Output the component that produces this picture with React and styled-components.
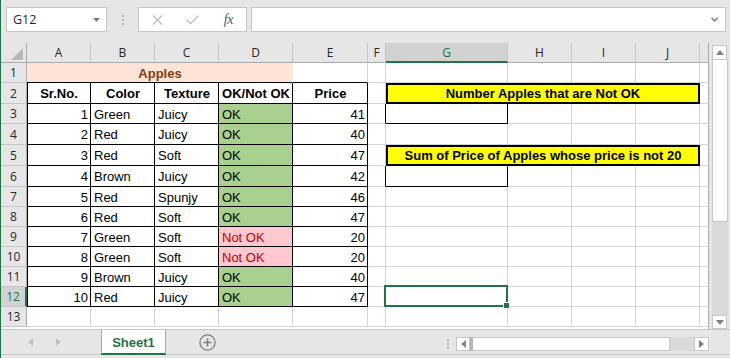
import React from "react";
import styled, { createGlobalStyle } from "styled-components";

const GlobalStyle = createGlobalStyle`
  html, body {
    margin: 0;
    padding: 0;
    background: #e6e6e6;
  }
`;

const GREEN = "#217346";
const GRIDLINE = "#d4d4d4";
const LINE = "#000";
const CHROME = "#e6e6e6";

const Window = styled.div`
  width: 730px;
  height: 358px;
  box-sizing: border-box;
  border-left: 1px solid ${GREEN};
  background: ${CHROME};
  display: flex;
  flex-direction: column;
  overflow: hidden;
  font-family: "Open Sans", "Liberation Sans", sans-serif;
`;

const FormulaBar = styled.div`
  height: 43px;
  flex: none;
  display: flex;
  align-items: flex-start;
  padding: 7px 4px 0 5px;
  box-sizing: border-box;
`;

const InputBox = styled.div`
  height: 25px;
  box-sizing: border-box;
  background: #fff;
  border: 1px solid #c6c6c6;
  display: flex;
  align-items: center;
`;

const NameBox = styled(InputBox)`
  width: 101px;
  padding: 0 6px;
  justify-content: space-between;
  font-size: 12.5px;
  color: #262626;
`;

const Grip = styled.div`
  width: 31px;
  height: 25px;
  display: flex;
  flex-direction: column;
  align-items: center;
  justify-content: center;
  gap: 2px;
  & span {
    width: 2px;
    height: 2px;
    background: ${(p) => p.$color || "#b4b4b4"};
  }
`;

const FxBox = styled(InputBox)`
  width: 109px;
  padding-left: 1px;
`;

const FxSlot = styled.div`
  width: 36px;
  display: flex;
  justify-content: center;
  align-items: center;
  color: ${(p) => p.$color || "#bdbdbd"};
`;

const FxText = styled.span`
  font-family: "Liberation Serif", serif;
  font-style: italic;
  font-size: 14px;
  color: #595959;
  letter-spacing: -0.5px;
`;

const FormulaInput = styled(InputBox)`
  flex: 1;
  margin-left: 4px;
  justify-content: flex-end;
  padding-right: 7px;
`;

const SheetArea = styled.div`
  height: 286px;
  flex: none;
  display: flex;
`;

const Grid = styled.div`
  width: 708px;
  box-sizing: border-box;
  background: #fff;
  border-right: 1px solid #ababab;
  display: grid;
  grid-template-columns: 26px 64px 64px 64px 74px 75px 18px 122px 64px 64px 64px 1fr;
  grid-template-rows: 20px ${(p) => p.$rows.map((h) => h + "px").join(" ")} 1fr;
  font-family: "Liberation Sans", Arial, sans-serif;
  font-size: 13px;
`;

const Corner = styled.div`
  background: ${CHROME};
  border-right: 1px solid #ababab;
  border-bottom: 1px solid #ababab;
  box-sizing: border-box;
  display: flex;
  align-items: flex-end;
  justify-content: flex-end;
  padding: 0 3px 2px 0;
`;

const ColHead = styled.div`
  box-sizing: border-box;
  background: ${(p) => (p.$active ? "#d2d2d2" : CHROME)};
  color: ${(p) => (p.$active ? GREEN : "#262626")};
  border-right: 1px solid ${(p) => (p.$last ? CHROME : "#c6c6c6")};
  border-bottom: ${(p) => (p.$active ? `2px solid ${GREEN}` : "1px solid #ababab")};
  display: flex;
  align-items: center;
  justify-content: center;
  font-family: "Open Sans", sans-serif;
  font-size: 12px;
  padding-top: ${(p) => (p.$active ? "1px" : "0")};
`;

const RowHead = styled.div`
  box-sizing: border-box;
  background: ${(p) => (p.$active ? "#d2d2d2" : CHROME)};
  color: ${(p) => (p.$active ? GREEN : "#262626")};
  border-right: ${(p) => (p.$active ? `2px solid ${GREEN}` : "1px solid #ababab")};
  border-bottom: 1px solid #c6c6c6;
  display: flex;
  align-items: center;
  justify-content: center;
  font-family: "Open Sans", sans-serif;
  font-size: 12px;
`;

const Cell = styled.div`
  box-sizing: border-box;
  grid-column: span ${(p) => p.$span || 1};
  min-width: 0;
  display: flex;
  align-items: center;
  justify-content: ${(p) => p.$align || "flex-start"};
  padding: 1px 2px 0 3px;
  background: ${(p) => p.$bg || "#fff"};
  color: ${(p) => p.$color || "#000"};
  font-weight: ${(p) => (p.$bold ? 700 : 400)};
  border-right: 1px solid ${(p) => p.$r || GRIDLINE};
  border-bottom: 1px solid ${(p) => p.$b || GRIDLINE};
  box-shadow: ${(p) => (p.$left ? "inset 1px 0 0 #000" : "none")};
  white-space: nowrap;
  overflow: hidden;
`;

const NoteCell = styled(Cell)`
  border: 2px solid ${LINE};
  background: #ffff00;
  justify-content: center;
  font-weight: 700;
  padding: 0;
`;

const SelectedCell = styled(Cell)`
  position: relative;
  overflow: visible;
  z-index: 2;
  &::before {
    content: "";
    position: absolute;
    left: -2px;
    top: -2px;
    right: -1px;
    bottom: -1px;
    border: 2px solid ${GREEN};
  }
  &::after {
    content: "";
    position: absolute;
    right: -3px;
    bottom: -3px;
    width: 5px;
    height: 5px;
    background: ${GREEN};
    border: 1px solid #fff;
  }
`;

const VScroll = styled.div`
  width: 21px;
  flex: none;
  box-sizing: border-box;
  padding: 2px 2px 0 3px;
  display: flex;
  flex-direction: column;
`;

const ScrollButton = styled.div`
  box-sizing: border-box;
  flex: none;
  width: ${(p) => p.$w || "15px"};
  height: ${(p) => p.$h || "15px"};
  background: #fff;
  border: 1px solid #c6c6c6;
  display: flex;
  align-items: center;
  justify-content: center;
`;

const VThumb = styled.div`
  height: 162px;
  flex: none;
  box-sizing: border-box;
  background: #fff;
  border: 1px solid #c6c6c6;
  border-top: none;
`;

const Track = styled.div`
  flex: 1;
  background: #dadada;
`;

const TabBar = styled.div`
  height: 26px;
  flex: none;
  box-sizing: border-box;
  border-top: 1px solid #c6c6c6;
  border-bottom: 1px solid #c6c6c6;
  display: flex;
  align-items: stretch;
`;

const TabNav = styled.div`
  width: 100px;
  display: flex;
  align-items: center;
  padding-left: 27px;
  gap: 23px;
  box-sizing: border-box;
`;

const Tab = styled.div`
  width: 65px;
  box-sizing: border-box;
  background: #fff;
  border-left: 1px solid #ababab;
  border-right: 1px solid #ababab;
  border-bottom: 2px solid ${GREEN};
  margin-bottom: -1px;
  display: flex;
  align-items: center;
  justify-content: center;
  color: ${GREEN};
  font-family: "Liberation Sans", Arial, sans-serif;
  font-weight: 700;
  font-size: 13px;
  padding-top: 1px;
`;

const AddSheet = styled.div`
  margin-left: 33px;
  display: flex;
  align-items: center;
`;

const HScroll = styled.div`
  margin-left: auto;
  margin-right: 21px;
  display: flex;
  align-items: flex-start;
  padding-top: 7px;
`;

const HThumb = styled.div`
  width: 200px;
  height: 14px;
  box-sizing: border-box;
  background: #fff;
  border: 1px solid #c6c6c6;
  border-left: 3px solid #b4b4b4;
`;

const HTrack = styled.div`
  width: 24px;
  height: 14px;
  background: #dadada;
`;

const apples = [
  [1, "Green", "Juicy", "OK", 41],
  [2, "Red", "Juicy", "OK", 40],
  [3, "Red", "Soft", "OK", 47],
  [4, "Brown", "Juicy", "OK", 42],
  [5, "Red", "Spunjy", "OK", 46],
  [6, "Red", "Soft", "OK", 47],
  [7, "Green", "Soft", "Not OK", 20],
  [8, "Green", "Soft", "Not OK", 20],
  [9, "Brown", "Juicy", "OK", 40],
  [10, "Red", "Juicy", "OK", 47],
];

const notes = {
  2: "Number Apples that are Not OK",
  5: "Sum of Price of Apples whose price is not 20",
};

const columns = ["A", "B", "C", "D", "E", "F", "G", "H", "I", "J", ""];
const rowHeights = [20, 21, 20, 21, 21, 21, 20, 20, 20, 20, 20, 20, 20];
const selectedRow = 12;

const Triangle = ({ dir, color = "#c0c0c0" }) => (
  <svg width="5" height="8" viewBox="0 0 5 8">
    <polygon points={dir === "left" ? "5,0 5,8 0,4" : "0,0 0,8 5,4"} fill={color} />
  </svg>
);

function rowCells(n) {
  const out = [];
  if (n === 1) {
    out.push(
      <Cell key="A" $span={4} $bg="#fce4d6" $r="#fce4d6" $b={LINE} $align="center" $bold $color="#843c0c">
        Apples
      </Cell>
    );
    out.push(<Cell key="E" $b={LINE} />);
  } else if (n === 2) {
    ["Sr.No.", "Color", "Texture", "OK/Not OK", "Price"].forEach((t, i) =>
      out.push(
        <Cell key={i} $left={i === 0} $r={LINE} $b={LINE} $align="center" $bold>
          {t}
        </Cell>
      )
    );
  } else if (n <= 12) {
    const [no, color, texture, status, price] = apples[n - 3];
    const bad = status !== "OK";
    out.push(<Cell key="A" $left $r={LINE} $b={LINE} $align="flex-end">{no}</Cell>);
    out.push(<Cell key="B" $r={LINE} $b={LINE}>{color}</Cell>);
    out.push(<Cell key="C" $r={LINE} $b={LINE}>{texture}</Cell>);
    out.push(
      <Cell key="D" $r={LINE} $b={LINE} $bg={bad ? "#ffc7ce" : "#a9d08e"} $color={bad ? "#c00000" : "#000"}>
        {status}
      </Cell>
    );
    out.push(<Cell key="E" $r={LINE} $b={LINE} $align="flex-end">{price}</Cell>);
  } else {
    ["A", "B", "C", "D", "E"].forEach((c) => out.push(<Cell key={c} />));
  }

  if (notes[n]) {
    out.push(<Cell key="F" />);
    out.push(<NoteCell key="G" $span={4}>{notes[n]}</NoteCell>);
  } else if (n === 3 || n === 6) {
    out.push(<Cell key="F" $r={LINE} />);
    out.push(<Cell key="G" $r={LINE} $b={LINE} />);
    ["H", "I", "J"].forEach((c) => out.push(<Cell key={c} />));
  } else {
    out.push(<Cell key="F" />);
    out.push(n === selectedRow ? <SelectedCell key="G" /> : <Cell key="G" />);
    ["H", "I", "J"].forEach((c) => out.push(<Cell key={c} />));
  }
  out.push(<Cell key="K" $r="#fff" />);
  return out;
}

export default function App() {
  return (
    <>
      <GlobalStyle />
      <Window>
        <FormulaBar>
          <NameBox>
            <span>G12</span>
            <svg width="7" height="4" viewBox="0 0 7 4">
              <polygon points="0,0 7,0 3.5,4" fill="#7a7a7a" />
            </svg>
          </NameBox>
          <Grip>
            <span />
            <span />
            <span />
          </Grip>
          <FxBox>
            <FxSlot>
              <svg width="11" height="10" viewBox="0 0 11 10">
                <path d="M1 0.5 L10 9.5 M10 0.5 L1 9.5" stroke="currentColor" strokeWidth="1.3" fill="none" />
              </svg>
            </FxSlot>
            <FxSlot>
              <svg width="13" height="10" viewBox="0 0 13 10">
                <path d="M0.8 5 L4.5 8.8 L12.3 0.8" stroke="currentColor" strokeWidth="1.4" fill="none" />
              </svg>
            </FxSlot>
            <FxSlot>
              <FxText>fx</FxText>
            </FxSlot>
          </FxBox>
          <FormulaInput>
            <svg width="7" height="5" viewBox="0 0 7 5">
              <path d="M0.5 0.8 L3.5 4 L6.5 0.8" stroke="#7a7a7a" strokeWidth="1.5" fill="none" />
            </svg>
          </FormulaInput>
        </FormulaBar>

        <SheetArea>
          <Grid $rows={rowHeights}>
            <Corner>
              <svg width="12" height="12" viewBox="0 0 12 12">
                <polygon points="12,0 12,12 0,12" fill="#b8b8b8" />
              </svg>
            </Corner>
            {columns.map((c, i) => (
              <ColHead key={i} $active={c === "G"} $last={i === columns.length - 1}>
                {c}
              </ColHead>
            ))}
            {rowHeights.map((_, i) => (
              <React.Fragment key={i}>
                <RowHead $active={i + 1 === selectedRow}>{i + 1}</RowHead>
                {rowCells(i + 1)}
              </React.Fragment>
            ))}
          </Grid>
          <VScroll>
            <ScrollButton>
              <svg width="8" height="5" viewBox="0 0 8 5">
                <polygon points="0,5 8,5 4,0" fill="#808080" />
              </svg>
            </ScrollButton>
            <VThumb />
            <Track />
            <ScrollButton $h="14px">
              <svg width="8" height="5" viewBox="0 0 8 5">
                <polygon points="0,0 8,0 4,5" fill="#808080" />
              </svg>
            </ScrollButton>
          </VScroll>
        </SheetArea>

        <TabBar>
          <TabNav>
            <Triangle dir="left" />
            <Triangle dir="right" />
          </TabNav>
          <Tab>Sheet1</Tab>
          <AddSheet>
            <svg width="17" height="17" viewBox="0 0 17 17">
              <circle cx="8.5" cy="8.5" r="7.6" stroke="#7f7f7f" strokeWidth="1.3" fill="none" />
              <path d="M8.5 4.5 V12.5 M4.5 8.5 H12.5" stroke="#7f7f7f" strokeWidth="1.6" />
            </svg>
          </AddSheet>
          <HScroll>
            <Grip $color="#b4b4b4" style={{ height: 14, width: 17 }}>
              <span />
              <span />
              <span />
            </Grip>
            <ScrollButton $w="14px" $h="14px">
              <Triangle dir="left" color="#808080" />
            </ScrollButton>
            <HThumb />
            <HTrack />
            <ScrollButton $w="15px" $h="14px">
              <Triangle dir="right" color="#808080" />
            </ScrollButton>
          </HScroll>
        </TabBar>
      </Window>
    </>
  );
}
